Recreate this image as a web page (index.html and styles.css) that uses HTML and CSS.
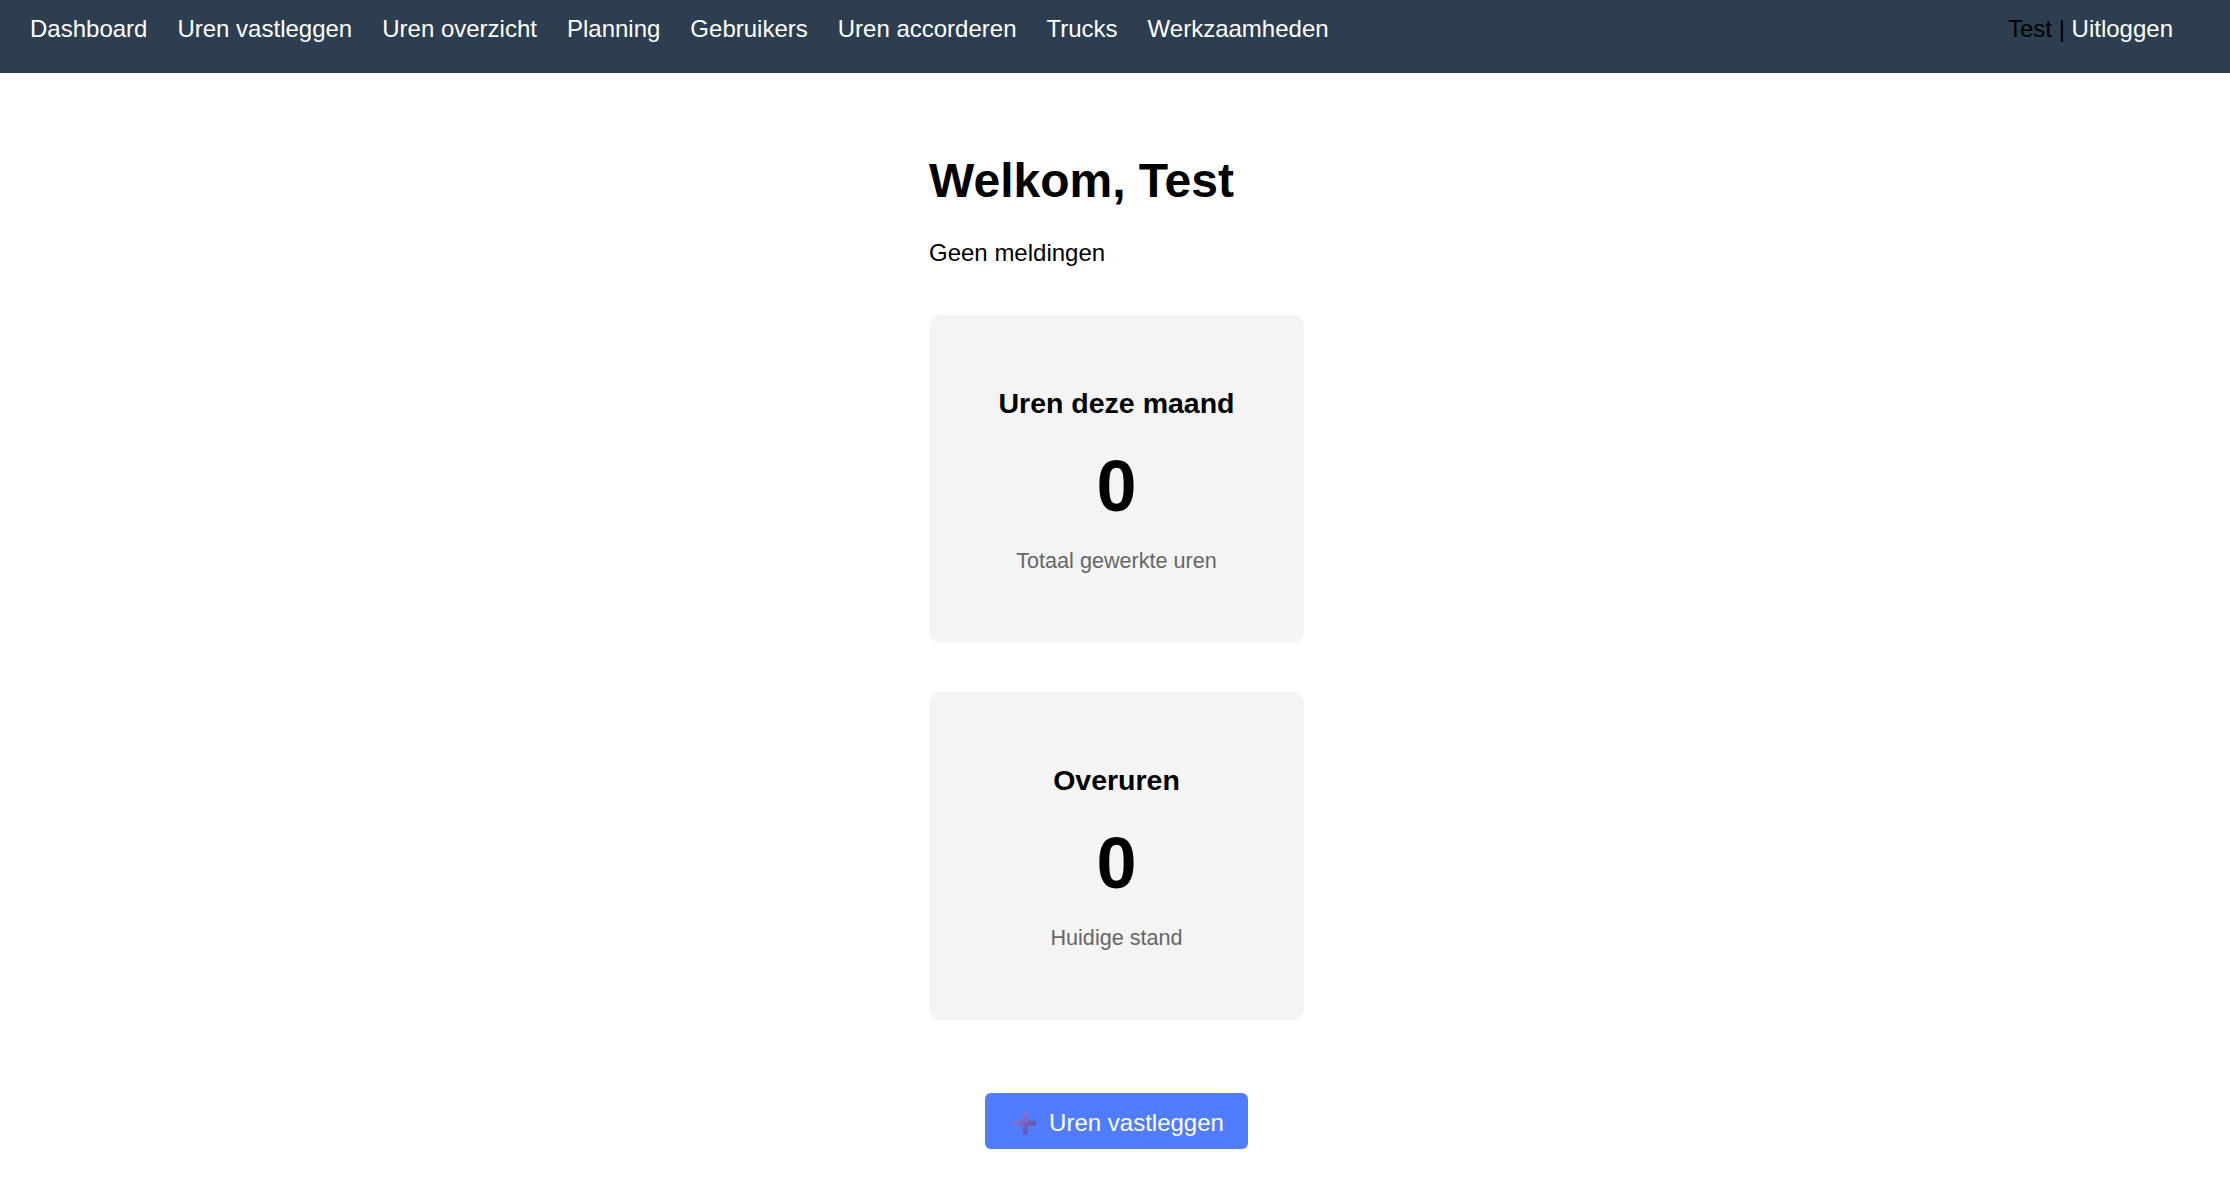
FILE: index.html
```html
<!DOCTYPE html>
<html lang="nl">
<head>
    <meta charset="UTF-8">
    <meta name="viewport" content="width=device-width, initial-scale=1.0">
    <title>Dashboard</title>
    <link rel="stylesheet" href="styles.css">
</head>
<body>
    <nav class="topnav">
        <div class="nav-links">
            <a href="#">Dashboard</a>
            <a href="#">Uren vastleggen</a>
            <a href="#">Uren overzicht</a>
            <a href="#">Planning</a>
            <a href="#">Gebruikers</a>
            <a href="#">Uren accorderen</a>
            <a href="#">Trucks</a>
            <a href="#">Werkzaamheden</a>
        </div>
        <div class="nav-user">
            <span>Test | </span><a href="#">Uitloggen</a>
        </div>
    </nav>

    <div class="container">
        <h1>Welkom, Test</h1>
        <p class="meldingen">Geen meldingen</p>

        <div class="card">
            <h3>Uren deze maand</h3>
            <div class="card-value">0</div>
            <p class="card-label">Totaal gewerkte uren</p>
        </div>

        <div class="card">
            <h3>Overuren</h3>
            <div class="card-value">0</div>
            <p class="card-label">Huidige stand</p>
        </div>

        <div class="actions">
            <a href="#" class="btn">
                <svg class="btn-icon" viewBox="0 0 24 24" width="24" height="24">
                    <defs>
                        <linearGradient id="plusGrad" x1="0" y1="0" x2="1" y2="1">
                            <stop offset="0" stop-color="#8f7bd8"/>
                            <stop offset="1" stop-color="#5f4aa6"/>
                        </linearGradient>
                    </defs>
                    <path d="M12 3 V21 M3 12 H21" stroke="url(#plusGrad)" stroke-width="5" stroke-linecap="round" fill="none"/>
                </svg>
                Uren vastleggen
            </a>
        </div>
    </div>
</body>
</html>
```

FILE: styles.css
```css
body {
    font-family: "Liberation Sans", Arial, sans-serif;
    margin: 0;
    padding: 0;
    background: #fff;
    color: #000;
}
.topnav {
    display: flex;
    justify-content: space-between;
    align-items: flex-start;
    height: 73px;
    box-sizing: border-box;
    padding: 15px 57px 0 30px;
    background-color: #2c3e50;
    font-size: 24px;
}
.nav-links {
    display: flex;
    gap: 30px;
}
.topnav a {
    color: #fff;
    text-decoration: none;
}
.nav-user span {
    color: #000;
}
.container {
    width: 378px;
    box-sizing: border-box;
    padding: 48px 0 0 3px;
    margin: 0 auto;
}
h1 {
    font-size: 48px;
    margin: 32px 0 31px;
}
.meldingen {
    font-size: 24px;
    margin: 0;
}
.card {
    background-color: #f4f4f4;
    border-radius: 12px;
    padding: 45px 30px;
    margin: 48px 0 49px;
    text-align: center;
}
.card h3 {
    font-size: 28.5px;
    margin: 27px 0 24.5px;
}
.card-value {
    font-size: 72px;
    font-weight: bold;
    margin-bottom: 21px;
}
.card-label {
    font-size: 21.6px;
    color: #666;
    margin: 0 0 24.5px;
}
.actions {
    text-align: center;
    margin-top: 73px;
}
.btn {
    display: inline-flex;
    align-items: center;
    height: 56px;
    box-sizing: border-box;
    padding: 4px 24px 0 28px;
    background-color: #507cff;
    color: #fff;
    font-size: 24px;
    text-decoration: none;
    border-radius: 6px;
}
.btn-icon {
    margin-right: 12px;
}
```
